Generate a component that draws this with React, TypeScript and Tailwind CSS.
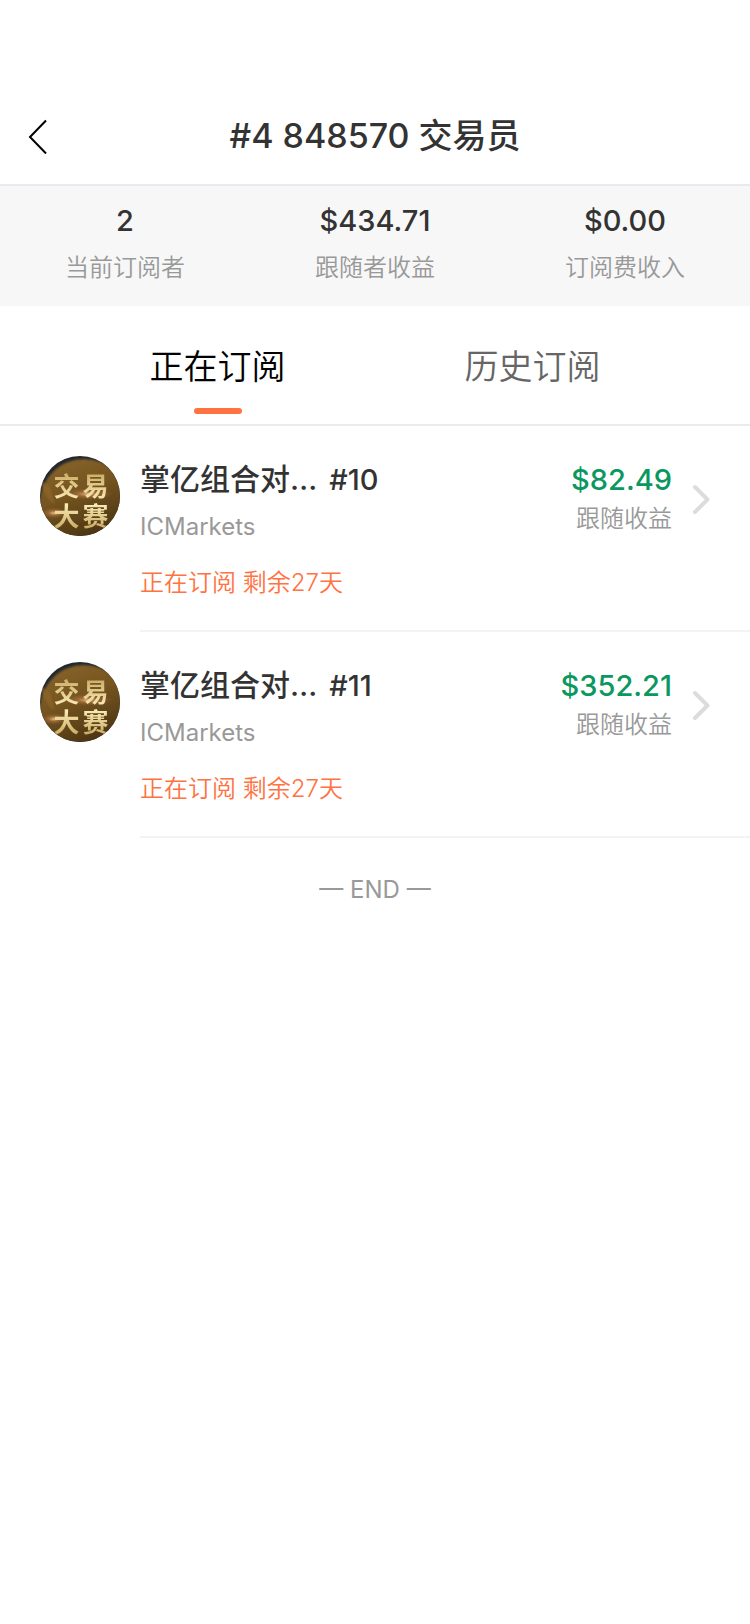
import { useState } from 'react';

const stats = [
  { value: '2', label: '当前订阅者' },
  { value: '$434.71', label: '跟随者收益' },
  { value: '$0.00', label: '订阅费收入' },
];

const tabs = ['正在订阅', '历史订阅'];

const subscriptions = [
  { name: '掌亿组合对…', rank: '#10', broker: 'ICMarkets', status: '正在订阅 剩余27天', profit: '$82.49' },
  { name: '掌亿组合对…', rank: '#11', broker: 'ICMarkets', status: '正在订阅 剩余27天', profit: '$352.21' },
];

function Avatar() {
  return (
    <div className="relative size-20 shrink-0 overflow-hidden rounded-full">
      <svg className="absolute inset-0" width="80" height="80" viewBox="0 0 80 80" aria-hidden="true">
        <defs>
          <linearGradient id="gold" x1="0.2" y1="0" x2="0.6" y2="1">
            <stop offset="0" stopColor="#87632a" />
            <stop offset="0.4" stopColor="#755420" />
            <stop offset="0.7" stopColor="#5c4219" />
            <stop offset="1" stopColor="#3f2b0b" />
          </linearGradient>
          <radialGradient id="flare">
            <stop offset="0" stopColor="#f0c08a" />
            <stop offset="0.4" stopColor="#b57c45" stopOpacity="0.6" />
            <stop offset="1" stopColor="#8a5c2a" stopOpacity="0" />
          </radialGradient>
          <filter id="soft">
            <feGaussianBlur stdDeviation="0.8" />
          </filter>
        </defs>
        <rect width="80" height="80" fill="#23272e" />
        <circle cx="44" cy="47" r="44" fill="url(#gold)" filter="url(#soft)" />
        <path d="M0 24Q4 42 15 49L10 30Z" fill="#94692a" opacity="0.6" filter="url(#soft)" />
        <ellipse cx="48" cy="38" rx="26" ry="6" fill="url(#flare)" />
        <ellipse cx="14" cy="57" rx="14" ry="6" fill="url(#flare)" />
      </svg>
      <div className="relative flex flex-col items-center pt-4 pl-0.5 text-[26px] leading-[30px] font-bold">
        <span className="flex gap-[3px] bg-linear-to-b from-[#c9aa62] to-[#fdf1bd] bg-clip-text text-transparent">
          <span>交</span>
          <span>易</span>
        </span>
        <span className="flex gap-[3px] bg-linear-to-b from-[#fdf3bd] to-[#c5a256] bg-clip-text text-transparent">
          <span>大</span>
          <span>赛</span>
        </span>
      </div>
    </div>
  );
}

export default function App() {
  const [active, setActive] = useState(0);
  return (
    <div className="min-h-screen bg-white font-['Inter','Noto_Sans_CJK_SC',sans-serif] text-[#333333]">
      <header className="grid grid-cols-[80px_1fr_80px] items-center border-b-2 border-[#e9e9ef] pt-[88px]">
        <button type="button" aria-label="返回" className="flex h-24 items-center pl-7">
          <svg width="20" height="36" viewBox="0 0 20 36" fill="none" stroke="#000" strokeWidth="2">
            <path d="M18 2.500 2 19l16 16.500" />
          </svg>
        </button>
        <h1 className="text-center text-[34px] leading-[48px] font-medium">#4 848570 交易员</h1>
      </header>

      <dl className="grid h-[120px] grid-cols-3 bg-[#f7f7f7] pt-3 text-center">
        {stats.map((s) => (
          <div key={s.label} className="flex flex-col-reverse justify-end gap-1.5">
            <dt className="text-2xl leading-9 font-[350] text-[#999999]">{s.label}</dt>
            <dd className="text-[29px] leading-[46px] font-medium">{s.value}</dd>
          </div>
        ))}
      </dl>

      <div role="tablist" className="grid grid-cols-2 border-b-2 border-[#ebebeb] px-[60px]">
        {tabs.map((t, i) => (
          <button
            key={t}
            type="button"
            role="tab"
            aria-selected={i === active}
            onClick={() => setActive(i)}
            className={
              i === active
                ? 'flex h-[118px] flex-col items-center pt-9 text-[34px] leading-[50px] font-[350] text-black'
                : 'flex h-[118px] flex-col items-center pt-9 text-[34px] leading-[50px] font-[350] text-[#666666]'
            }
          >
            {t}
            {i === active && <span className="mt-4 h-1.5 w-12 rounded-full bg-[#ff7241]" />}
          </button>
        ))}
      </div>

      <ul>
        {subscriptions.map((s) => (
          <li key={s.rank}>
            <a href="#detail" className="flex gap-5 pl-10">
              <div className="pt-[30px]">
                <Avatar />
              </div>
              <div className="flex h-[206px] flex-1 justify-between border-b-2 border-[#f3f3f3] pt-[31px] pr-10">
                <div>
                  <p className="flex items-baseline gap-3 leading-[44px] font-medium">
                    <span className="text-[30px]">{s.name}</span>
                    <span className="text-[29px]">{s.rank}</span>
                  </p>
                  <p className="mt-[7px] text-2xl leading-9 text-[#999999]">{s.broker}</p>
                  <p className="mt-5 text-2xl leading-9 font-[350] text-[#ff7241]">{s.status}</p>
                </div>
                <div className="flex items-start gap-5 text-right">
                  <div>
                    <p className="text-[29px] leading-[46px] font-medium text-[#0a9860]">{s.profit}</p>
                    <p className="text-2xl leading-8 font-[350] text-[#999999]">跟随收益</p>
                  </div>
                  <svg className="mt-[26px]" width="18" height="34" viewBox="0 0 18 34" fill="none" stroke="#dcdcdc" strokeWidth="4" strokeLinecap="round" strokeLinejoin="round">
                    <path d="M3 4 15.500 16.500 3 29" />
                  </svg>
                </div>
              </div>
            </a>
          </li>
        ))}
      </ul>
      <p className="pt-[34px] text-center text-2xl leading-9 text-[#999999]">— END —</p>
    </div>
  );
}
